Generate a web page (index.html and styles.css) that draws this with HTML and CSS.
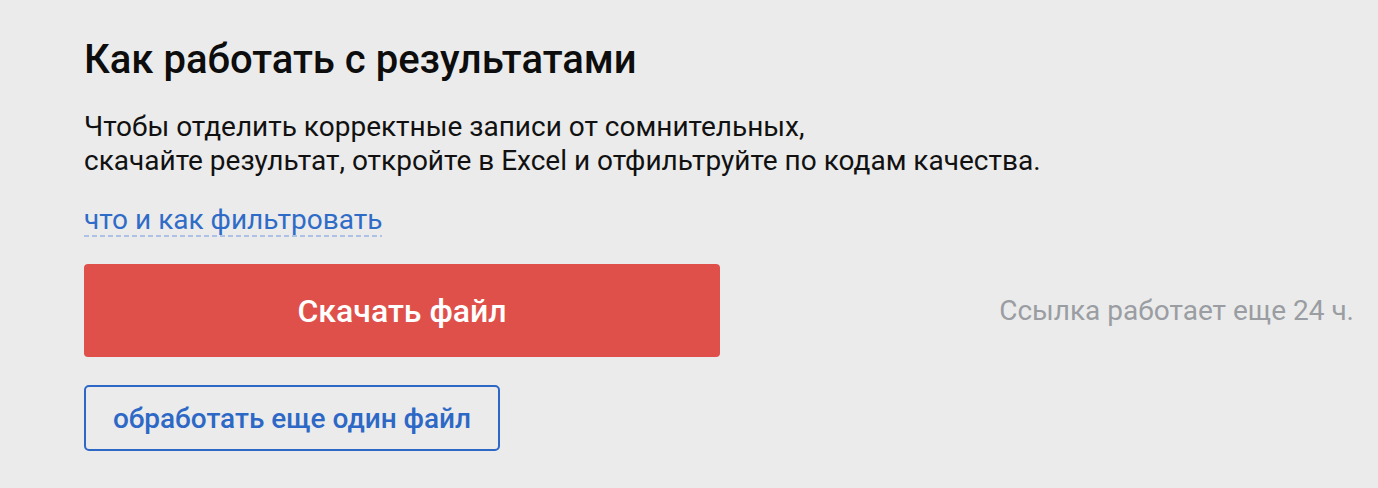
FILE: index.html
```html
<!DOCTYPE html>
<html lang="ru">
<head>
<meta charset="utf-8">
<link rel="stylesheet" href="styles.css">
</head>
<body>
<main class="panel">
  <h1 class="title">Как работать с результатами</h1>
  <p class="lead">Чтобы отделить корректные записи от сомнительных,<br>скачайте результат, откройте в Excel и отфильтруйте по кодам качества.</p>
  <a class="hint" href="#">что и как фильтровать</a>
  <div class="download-row">
    <a class="btn-primary" href="#">Скачать файл</a>
    <span class="expire">Ссылка работает еще 24 ч.</span>
  </div>
  <a class="btn-outline" href="#">обработать еще один файл</a>
</main>
</body>
</html>
```
FILE: styles.css
```css
html, body {
  margin: 0;
  padding: 0;
  background: #ebebeb;
}
body {
  font-family: Roboto, "Liberation Sans", sans-serif;
  color: #111;
}
.panel {
  padding: 36px 24px 0 84px;
  display: flex;
  flex-direction: column;
  align-items: flex-start;
}
.title {
  margin: 0;
  font-size: 40px;
  font-weight: 500;
  line-height: 48px;
  color: #0d0d0d;
}
.lead {
  margin: 26px 0 0;
  font-size: 28px;
  line-height: 34px;
  color: #111;
}
.hint {
  margin-top: 27px;
  padding-bottom: 2px;
  font-size: 28px;
  line-height: 30px;
  color: #2f6cc8;
  text-decoration: none;
  background-image: repeating-linear-gradient(to right, #adc2e6 0 5px, transparent 5px 8px);
  background-size: 100% 2px;
  background-position: left bottom;
  background-repeat: no-repeat;
}
.download-row {
  margin-top: 27px;
  align-self: stretch;
  display: flex;
  align-items: center;
  justify-content: space-between;
}
.btn-primary {
  width: 636px;
  height: 93px;
  display: flex;
  align-items: center;
  justify-content: center;
  background: #e0504a;
  border-radius: 4px;
  color: #fff;
  font-size: 32px;
  font-weight: 500;
  text-decoration: none;
}
.expire {
  font-size: 28px;
  color: #9a9da2;
}
.btn-outline {
  margin-top: 28px;
  box-sizing: border-box;
  width: 416px;
  height: 66px;
  display: flex;
  align-items: center;
  justify-content: center;
  border: 2px solid #2d68c6;
  border-radius: 5px;
  color: #2d68c6;
  font-size: 28px;
  font-weight: 500;
  text-decoration: none;
}
```
